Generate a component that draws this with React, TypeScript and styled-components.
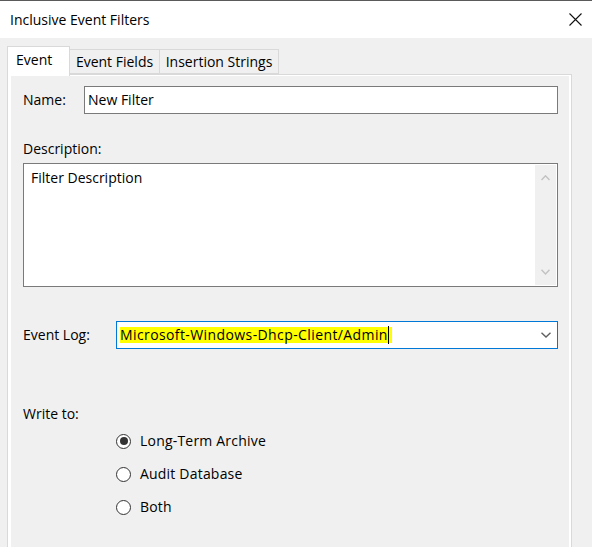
import React from "react";
import styled, { createGlobalStyle } from "styled-components";

const Global = createGlobalStyle`
  html, body { margin: 0; padding: 0; background: #f0f0f0; }
  body { font-family: "Open Sans", "Noto Sans", sans-serif; font-size: 14px; color: #000; }
  * { box-sizing: border-box; }
`;

const Window = styled.div`
  width: 592px;
  height: 547px;
  overflow: hidden;
  display: flex;
  flex-direction: column;
  border-top: 1px solid #5a5a5a;
  background: #f0f0f0;
`;

const TitleBar = styled.div`
  height: 37px;
  flex: none;
  background: #ffffff;
  display: flex;
  align-items: center;
  justify-content: space-between;
  padding: 0 10px 0 10px;
`;

const Title = styled.span`
  font-size: 14px;
  line-height: 20px;
  margin-top: 1px;
`;

const CloseButton = styled.div`
  width: 13px;
  height: 13px;
  display: flex;
  margin-top: -1px;
`;

const Body = styled.div`
  flex: 1;
  display: flex;
  flex-direction: column;
  padding: 8px 20px 0 7px;
  min-height: 0;
`;

const TabStrip = styled.div`
  display: flex;
  align-items: flex-end;
  height: 28px;
  flex: none;
  position: relative;
  z-index: 2;
`;

const Tab = styled.div<{ $active?: boolean; $width: number }>`
  width: ${(p) => p.$width}px;
  height: ${(p) => (p.$active ? 30 : 25)}px;
  margin-bottom: ${(p) => (p.$active ? -2 : 0)}px;
  background: ${(p) => (p.$active ? "#ffffff" : "#f0f0f0")};
  border: 1px solid #d9d9d9;
  border-bottom: ${(p) => (p.$active ? "none" : "1px solid #d9d9d9")};
  border-left: ${(p) => (p.$active ? "1px solid #d9d9d9" : "none")};
  display: flex;
  align-items: center;
  justify-content: ${(p) => (p.$active ? "flex-start" : "center")};
  padding-left: ${(p) => (p.$active ? 8 : 0)}px;
  padding-bottom: ${(p) => (p.$active ? 3 : 0)}px;
  font-size: 14px;
  line-height: 20px;
  white-space: nowrap;
`;

const TabPanel = styled.div`
  flex: 1;
  width: 565px;
  border: 1px solid #d9d9d9;
  border-bottom: none;
  background: #ffffff;
  padding: 1px 2px 0 3px;
  display: flex;
  min-height: 0;
`;

const Page = styled.div`
  flex: 1;
  background: #f0f0f0;
  padding: 10px 11px 0 12px;
  display: flex;
  flex-direction: column;
`;

const FieldRow = styled.div<{ $top: number; $labelWidth: number }>`
  display: grid;
  grid-template-columns: ${(p) => p.$labelWidth}px 1fr;
  align-items: center;
  margin-top: ${(p) => p.$top}px;
`;

const Label = styled.div<{ $top?: number }>`
  font-size: 14px;
  line-height: 20px;
  margin-top: ${(p) => p.$top ?? 0}px;
`;

const TextInput = styled.div`
  height: 28px;
  background: #ffffff;
  border: 1px solid #7a7a7a;
  display: flex;
  align-items: center;
  padding-left: 3px;
  font-size: 14px;
  line-height: 20px;
`;

const TextArea = styled.div`
  margin-top: 4px;
  height: 124px;
  background: #ffffff;
  border: 1px solid #7a7a7a;
  display: flex;
  padding: 1px;
`;

const TextAreaContent = styled.div`
  flex: 1;
  padding: 3px 0 0 6px;
  font-size: 14px;
  line-height: 20px;
`;

const ScrollBar = styled.div`
  width: 21px;
  background: #f0f0f0;
  display: flex;
  flex-direction: column;
  justify-content: space-between;
  align-items: center;
  padding: 10px 0 10px;
`;

const Combo = styled.div`
  height: 28px;
  background: #ffffff;
  border: 1px solid #0078d7;
  display: flex;
  align-items: center;
  justify-content: space-between;
  padding: 0 6px 0 3px;
`;

const Highlight = styled.span`
  background: #ffff00;
  display: inline-flex;
  align-items: center;
  height: 16px;
  padding-right: 3px;
  font-size: 14px;
  line-height: 20px;
  letter-spacing: 0.4px;
  white-space: nowrap;
`;

const Caret = styled.span`
  display: inline-block;
  width: 1px;
  height: 18px;
  background: #000;
  margin-left: 0;
`;

const RadioGroup = styled.div`
  display: flex;
  flex-direction: column;
  gap: 13px;
  margin: 7px 0 0 93px;
`;

const RadioRow = styled.div`
  display: flex;
  align-items: center;
  height: 20px;
  gap: 9px;
  font-size: 14px;
  line-height: 20px;
  letter-spacing: 0.2px;
`;

const RadioCircle = styled.span<{ $checked?: boolean }>`
  width: 15px;
  height: 15px;
  border-radius: 50%;
  border: 1px solid #333333;
  background: #ffffff;
  display: flex;
  align-items: center;
  justify-content: center;
  flex: none;
  &::after {
    content: "";
    display: ${(p) => (p.$checked ? "block" : "none")};
    width: 8px;
    height: 8px;
    border-radius: 50%;
    background: #333333;
  }
`;

const Chevron = ({ up, color, w = 9, h = 5 }: { up?: boolean; color: string; w?: number; h?: number }) => (
  <svg width={w} height={h + 1} viewBox={`0 0 ${w} ${h + 1}`}>
    <polyline
      points={up ? `0.5,${h} ${w / 2},0.8 ${w - 0.5},${h}` : `0.5,0.8 ${w / 2},${h} ${w - 0.5},0.8`}
      fill="none"
      stroke={color}
      strokeWidth={1.4}
    />
  </svg>
);

export default function App() {
  return (
    <>
      <Global />
      <Window>
        <TitleBar>
          <Title>Inclusive Event Filters</Title>
          <CloseButton>
            <svg width="13" height="13" viewBox="0 0 13 13">
              <path d="M0.5 0.5 L12.5 12.5 M12.5 0.5 L0.5 12.5" stroke="#111" strokeWidth="1.1" fill="none" />
            </svg>
          </CloseButton>
        </TitleBar>
        <Body>
          <TabStrip>
            <Tab $active $width={63}>Event</Tab>
            <Tab $width={90}>Event Fields</Tab>
            <Tab $width={119}>Insertion Strings</Tab>
          </TabStrip>
          <TabPanel>
            <Page>
              <FieldRow $top={0} $labelWidth={61}>
                <Label>Name:</Label>
                <TextInput>New Filter</TextInput>
              </FieldRow>
              <Label $top={25}>Description:</Label>
              <TextArea>
                <TextAreaContent>Filter Description</TextAreaContent>
                <ScrollBar>
                  <Chevron up color="#c2c2c2" />
                  <Chevron color="#c2c2c2" />
                </ScrollBar>
              </TextArea>
              <FieldRow $top={34} $labelWidth={93}>
                <Label>Event Log:</Label>
                <Combo>
                  <Highlight>
                    Microsoft-Windows-Dhcp-Client/Admin
                    <Caret />
                  </Highlight>
                  <Chevron color="#606060" w={10} h={5} />
                </Combo>
              </FieldRow>
              <Label $top={55}>Write to:</Label>
              <RadioGroup>
                <RadioRow>
                  <RadioCircle $checked />
                  Long-Term Archive
                </RadioRow>
                <RadioRow>
                  <RadioCircle />
                  Audit Database
                </RadioRow>
                <RadioRow>
                  <RadioCircle />
                  Both
                </RadioRow>
              </RadioGroup>
            </Page>
          </TabPanel>
        </Body>
      </Window>
    </>
  );
}
